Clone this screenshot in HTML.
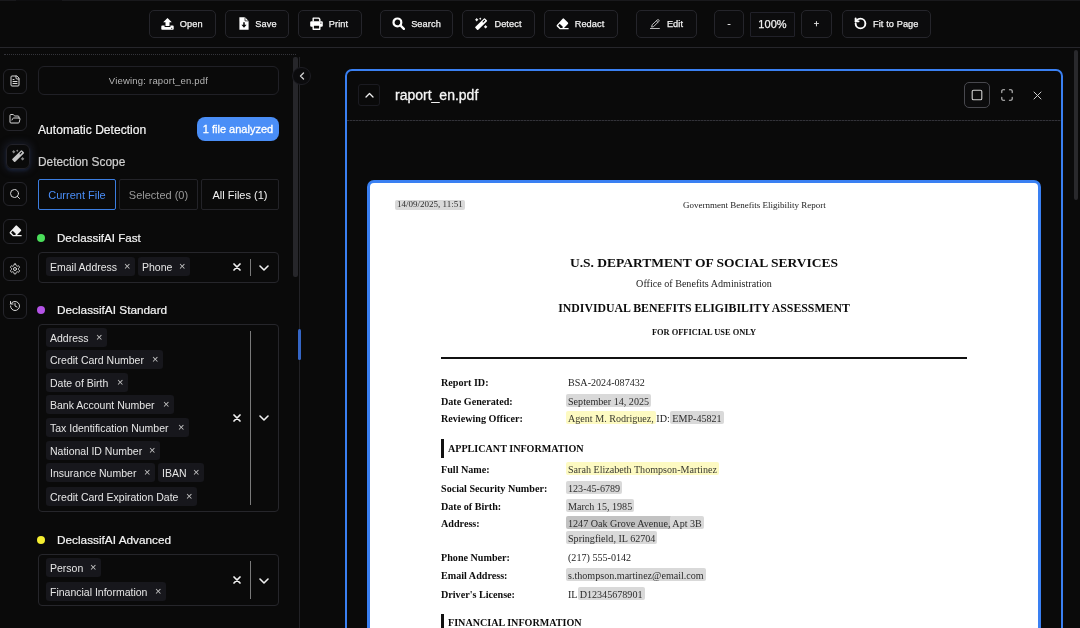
<!DOCTYPE html>
<html>
<head>
<meta charset="utf-8">
<title>raport_en.pdf</title>
<style>
*{box-sizing:border-box;margin:0;padding:0}
html,body{width:1080px;height:628px;overflow:hidden;background:#0a0a0a;font-family:"Liberation Sans",sans-serif;color:#fff}
.abs{position:absolute}
#app{position:relative;width:1080px;height:628px;overflow:hidden;background:#0a0a0a;will-change:transform}
/* toolbar */
#tb{position:absolute;left:0;top:0;width:1080px;height:48px;border-bottom:1px solid #26262b}
.tbtn{position:absolute;top:10px;height:28px;border:1px solid #25252b;border-radius:5px;background:#0c0c0d;color:#f2f2f2;font-size:9.2px;font-weight:400;display:flex;align-items:center;justify-content:center;letter-spacing:.1px;-webkit-text-stroke:.25px #f2f2f2;padding-bottom:1px}
.tbtn svg{margin-right:6px;flex:none}
/* sidebar */
#sb{position:absolute;left:0;top:48px;width:300px;height:580px}
.ib{position:absolute;left:3px;width:24px;height:24.5px;border:1px solid #25252b;border-radius:6px;display:flex;align-items:center;justify-content:center}
.h{position:absolute;left:38px;font-size:12.5px;color:#f4f4f4;white-space:nowrap;-webkit-text-stroke:.2px currentColor}
.dot{position:absolute;left:37px;width:8px;height:8px;border-radius:50%}
.sel{position:absolute;left:38px;width:241px;border:1px solid #26262b;border-radius:4px}
.chip{position:absolute;height:19px;background:#17171c;border-radius:3px;font-size:10.5px;color:#e6e6e6;padding-left:4px;line-height:20.5px;white-space:nowrap}
.chip i{position:absolute;right:4.5px;top:-.7px;font-style:normal;color:#c8c8c8;font-size:11px}
.tab{position:absolute;top:179px;height:31px;border:1px solid #232328;border-radius:2px;font-size:11px;display:flex;align-items:center;justify-content:center}
/* viewer */
#vw{position:absolute;left:345px;top:69px;width:718px;height:600px;border:2px solid #3a80f2;border-radius:7px;background:#0a0a0a}
#pg{position:absolute;left:367px;top:180px;width:674px;height:500px;border:3px solid #3a80f2;border-radius:7px;background:#fff;color:#111;font-family:"Liberation Serif",serif}
.p{position:absolute;white-space:nowrap;font-size:10.1px;color:#1c1c1c}
.b{font-weight:700;color:#0c0c0c}
.p.b{font-size:10.15px}
.hl{background:#d9d9d9;border-radius:2px;padding:2px 2px 0;margin:0 -2px;color:#2c2c2c}
.hy{background:#fdfac2;border-radius:2px;padding:2px 2px 0;margin:0 -2px;color:#3a3a30}
</style>
</head>
<body>
<div id="app">
<div id="tb">
<div class="abs" style="left:0;top:0;width:1080px;height:1px;background:#19191c"></div><div class="abs" style="left:16px;top:0;width:46px;height:1px;background:#0e0e10"></div>
<div class="tbtn" style="left:149px;width:67px"><svg width="13" height="12" viewBox="0 0 13 12" style="margin-left:-1.500px"><path d="M6.5 0 L10.8 4.3 H8.5 V8 H4.5 V4.3 H2.2 Z" fill="#fff"/><path d="M1.1 7.6 H3.6 V9 H9.4 V7.6 H11.9 A.8.8 0 0 1 12.7 8.4 V11 A.8.8 0 0 1 11.9 11.800 H1.1 A.8.8 0 0 1 .3 11 V8.4 A.8.8 0 0 1 1.1 7.6 Z" fill="#fff"/><circle cx="10.7" cy="10.3" r=".55" fill="#0a0a0a"/></svg>Open</div>
<div class="tbtn" style="left:225px;width:64px"><svg width="10" height="13" viewBox="0 0 10 13" style="margin-left:2px"><path d="M0.4 0.3 H6 L9.6 3.9 V12.7 H0.4 Z" fill="#fff"/><path d="M6 0.3 V3.9 H9.6" fill="none" stroke="#0a0a0a" stroke-width=".7"/><path d="M4.250 5.200 H5.750 V7.800 H7.600 L5 10.800 L2.400 7.800 H4.250 Z" fill="#0a0a0a"/></svg>Save</div>
<div class="tbtn" style="left:298px;width:64px"><svg width="13" height="13" viewBox="0 0 13 13" style="margin-left:-2px"><path d="M3.200 4.600 V1.100 H8.700 L9.800 2.200 V4.600" fill="none" stroke="#fff" stroke-width="1.400" stroke-linejoin="round"/><rect x=".2" y="4.300" width="12.600" height="5.400" rx="1.300" fill="#fff"/><rect x="3.200" y="8.100" width="6.600" height="4.100" fill="#0a0a0a" stroke="#fff" stroke-width="1.400" stroke-linejoin="round"/><circle cx="10.900" cy="6.100" r=".6" fill="#0a0a0a"/></svg>Print</div>
<div class="tbtn" style="left:380px;width:73px"><svg width="13" height="13" viewBox="0 0 13 13"><circle cx="5.4" cy="5.4" r="3.9" fill="none" stroke="#fff" stroke-width="2.2"/><path d="M8.4 8.4 L11.9 11.9" stroke="#fff" stroke-width="2.3" stroke-linecap="round"/></svg>Search</div>
<div class="tbtn" style="left:462px;width:73px"><svg width="13" height="14" viewBox="0 0.300 13 14"><rect x="-2" y="-6.800" width="4" height="13.600" rx=".9" transform="translate(6.150 7.450) rotate(46)" fill="#fff"/><path d="M8.150 5.150 L9.550 3.750" stroke="#0a0a0a" stroke-width="1.150" stroke-linecap="round"/><path d="M1.70 1.30 L2.54 2.21 L3.45 3.05 L2.54 3.89 L1.70 4.80 L0.86 3.89 L-0.05 3.05 L0.86 2.21 Z" fill="#f0f0f0"/><path d="M5.25 0.90 L5.80 1.50 L6.40 2.05 L5.80 2.60 L5.25 3.20 L4.70 2.60 L4.10 2.05 L4.70 1.50 Z" fill="#f0f0f0"/><path d="M10.60 8.35 L11.44 9.26 L12.35 10.10 L11.44 10.94 L10.60 11.85 L9.76 10.94 L8.85 10.10 L9.76 9.26 Z" fill="#f0f0f0"/></svg>Detect</div>
<div class="tbtn" style="left:544px;width:74px"><svg width="13" height="12" viewBox="0 0 13 12" style="margin-left:-2px"><path d="M6.6 0.7 A1 1 0 0 1 8 0.7 L11.9 4.6 A1 1 0 0 1 11.9 6 L8 9.9 H12.6 V11.3 H3.8 L0.9 8.4 A1 1 0 0 1 0.9 7 Z" fill="#fff"/><path d="M3.7 5.7 L7 9 L6.2 9.9 H4.4 L2.1 7.6 Z" fill="#0a0a0a"/></svg>Redact</div>
<div class="tbtn" style="left:636px;width:61px"><svg width="10" height="10" viewBox="0 0 10 10" fill="none" stroke="#cfcfcf" stroke-width=".9" stroke-linecap="round" stroke-linejoin="round" style="margin-right:7px"><path d="M0.400 9.500 H9.400"/><path d="M7.300 0.900 a1.050 1.050 0 0 1 1.500 1.500 L3.600 7.600 L1.600 8.100 L2.100 6.100 Z"/><path d="M6.400 1.800 L7.900 3.300"/></svg>Edit</div>
<div class="tbtn" style="left:714px;width:30px">-</div>
<div class="tbtn" style="left:750px;width:45px;top:12px;height:25px;border-radius:1px;border-color:#212129;font-size:11px">100%</div>
<div class="tbtn" style="left:801px;width:31px">+</div>
<div class="tbtn" style="left:841.5px;width:89.5px"><svg width="13" height="13" viewBox="0 0 24 24" fill="none" stroke="#fff" stroke-width="3.500" stroke-linecap="round" stroke-linejoin="round"><path d="M3 12a9 9 0 1 0 9-9 9.750 9.750 0 0 0-6.740 2.740L3 8"/><path d="M3 2.500v5.500h5.500"/></svg>Fit to Page</div>
</div>
<div id="sb">
<div class="abs" style="left:4px;top:6px;width:292px;height:0;border-top:1px dotted #34343a"></div>
<div class="ib" style="top:21px;"><svg width="12" height="12" viewBox="0 0 24 24" fill="none" stroke="#d8d8d8" stroke-width="2" stroke-linecap="round" stroke-linejoin="round"><path d="M15 2H6a2 2 0 0 0-2 2v16a2 2 0 0 0 2 2h12a2 2 0 0 0 2-2V7Z"/><path d="M14 2v4a2 2 0 0 0 2 2h4"/><path d="M10 9H8"/><path d="M16 13H8"/><path d="M16 17H8"/></svg></div>
<div class="ib" style="top:58.5px;"><svg width="12" height="12" viewBox="0 0 24 24" fill="none" stroke="#d8d8d8" stroke-width="2" stroke-linecap="round" stroke-linejoin="round"><path d="m6 14 1.500-2.900A2 2 0 0 1 9.240 10H20a2 2 0 0 1 1.940 2.500l-1.540 6a2 2 0 0 1-1.950 1.500H4a2 2 0 0 1-2-2V5a2 2 0 0 1 2-2h3.900a2 2 0 0 1 1.690.900l.810 1.200a2 2 0 0 0 1.670.900H18a2 2 0 0 1 2 2v2"/></svg></div>
<div class="ib" style="top:96px;left:6px;box-shadow:0 0 7px 2px rgba(45,52,80,.4),0 2px 3px rgba(50,90,180,.18);border-color:#222229;"><svg width="13" height="14" viewBox="0 0.300 13 14"><rect x="-2" y="-6.800" width="4" height="13.600" rx=".9" transform="translate(6.150 7.450) rotate(46)" fill="#c6c6c6"/><path d="M8.150 5.150 L9.550 3.750" stroke="#0a0a0a" stroke-width="1.150" stroke-linecap="round"/><path d="M1.70 1.30 L2.54 2.21 L3.45 3.05 L2.54 3.89 L1.70 4.80 L0.86 3.89 L-0.05 3.05 L0.86 2.21 Z" fill="#8c8c8c"/><path d="M5.25 0.90 L5.80 1.50 L6.40 2.05 L5.80 2.60 L5.25 3.20 L4.70 2.60 L4.10 2.05 L4.70 1.50 Z" fill="#8c8c8c"/><path d="M10.60 8.35 L11.44 9.26 L12.35 10.10 L11.44 10.94 L10.60 11.85 L9.76 10.94 L8.85 10.10 L9.76 9.26 Z" fill="#8c8c8c"/></svg></div>
<div class="ib" style="top:133.5px;"><svg width="12" height="12" viewBox="0 0 24 24" fill="none" stroke="#d8d8d8" stroke-width="2" stroke-linecap="round" stroke-linejoin="round"><circle cx="11" cy="11" r="8"/><path d="m21 21-4.300-4.300"/></svg></div>
<div class="ib" style="top:171px;"><svg width="13" height="12" viewBox="0 0 13 12"><path d="M6.600 0.700 A1 1 0 0 1 8 0.700 L11.900 4.600 A1 1 0 0 1 11.900 6 L8 9.900 H12.600 V11.300 H3.800 L0.900 8.400 A1 1 0 0 1 0.900 7 Z" fill="#f0f0f0"/><path d="M3.700 5.700 L7 9 L6.200 9.900 H4.400 L2.100 7.600 Z" fill="#0a0a0a"/></svg></div>
<div class="ib" style="top:208.5px;"><svg width="12" height="12" viewBox="0 0 24 24" fill="none" stroke="#d8d8d8" stroke-width="2" stroke-linecap="round" stroke-linejoin="round"><path d="M12.220 2h-.440a2 2 0 0 0-2 2v.180a2 2 0 0 1-1 1.730l-.430.250a2 2 0 0 1-2 0l-.150-.080a2 2 0 0 0-2.730.730l-.220.380a2 2 0 0 0 .730 2.730l.150.100a2 2 0 0 1 1 1.720v.510a2 2 0 0 1-1 1.740l-.150.090a2 2 0 0 0-.730 2.730l.220.380a2 2 0 0 0 2.730.730l.150-.080a2 2 0 0 1 2 0l.430.250a2 2 0 0 1 1 1.730V20a2 2 0 0 0 2 2h.440a2 2 0 0 0 2-2v-.180a2 2 0 0 1 1-1.730l.430-.250a2 2 0 0 1 2 0l.150.080a2 2 0 0 0 2.730-.730l.220-.390a2 2 0 0 0-.730-2.730l-.150-.080a2 2 0 0 1-1-1.740v-.500a2 2 0 0 1 1-1.740l.150-.090a2 2 0 0 0 .730-2.730l-.220-.380a2 2 0 0 0-2.730-.730l-.150.080a2 2 0 0 1-2 0l-.430-.250a2 2 0 0 1-1-1.730V4a2 2 0 0 0-2-2z"/><circle cx="12" cy="12" r="3"/></svg></div>
<div class="ib" style="top:246px;"><svg width="12" height="12" viewBox="0 0 24 24" fill="none" stroke="#d8d8d8" stroke-width="2" stroke-linecap="round" stroke-linejoin="round"><path d="M3 12a9 9 0 1 0 9-9 9.750 9.750 0 0 0-6.740 2.740L3 8"/><path d="M3 3v5h5"/><path d="M12 7v5l4 2"/></svg></div>
<div class="abs" style="left:38px;top:18px;width:241px;height:29px;border:1px solid #202026;border-radius:6px;font-size:9.500px;color:#b4b4b4;text-align:center;line-height:27px;letter-spacing:.2px">Viewing: raport_en.pdf</div>
<div class="h" style="top:75px;font-size:12.1px">Automatic Detection</div>
<div class="abs" style="left:197px;top:69px;width:82px;height:24px;background:#4a8ef7;border-radius:8px;font-size:11px;color:#fff;text-align:center;line-height:24px;-webkit-text-stroke:.3px #fff">1 file analyzed</div>
<div class="h" style="top:107px;color:#cfcfcf;font-size:11.9px">Detection Scope</div>
<div class="tab" style="top:131px;left:38px;width:78px;border-color:#3b7de0;color:#4a8ef7">Current File</div>
<div class="tab" style="top:131px;left:119px;width:79px;color:#9a9a9a">Selected (0)</div>
<div class="tab" style="top:131px;left:201px;width:78px;color:#f2f2f2">All Files (1)</div>
<div class="dot" style="top:185.5px;background:#4ade5a"></div><div class="h" style="left:57px;top:183px;font-size:11.6px">DeclassifAI Fast</div>
<div class="sel" style="top:204px;height:30.5px"></div>
<div class="chip" style="left:46px;top:209px;width:89px">Email Address<i>×</i></div><div class="chip" style="left:138px;top:209px;width:52px">Phone<i>×</i></div><svg class="abs" style="left:233px;top:215px" width="8" height="8" viewBox="0 0 8 8"><path d="M1 1 L7 7 M7 1 L1 7" stroke="#f0f0f0" stroke-width="1.7" stroke-linecap="round"/></svg><div class="abs" style="left:250px;top:211px;width:1px;height:17px;background:#7a7a7a"></div><svg class="abs" style="left:259px;top:217px" width="10" height="6" viewBox="0 0 10 6"><path d="M1 1 L5 5 L9 1" fill="none" stroke="#f0f0f0" stroke-width="1.6" stroke-linecap="round" stroke-linejoin="round"/></svg>
<div class="dot" style="top:257.5px;background:#b453e6"></div><div class="h" style="left:57px;top:255px;font-size:11.8px">DeclassifAI Standard</div>
<div class="sel" style="top:276px;height:188px"></div>
<div class="chip" style="left:46px;top:280px;width:61px">Address<i>×</i></div>
<div class="chip" style="left:46px;top:302px;width:117px">Credit Card Number<i>×</i></div>
<div class="chip" style="left:46px;top:325px;width:82px">Date of Birth<i>×</i></div>
<div class="chip" style="left:46px;top:347px;width:128px">Bank Account Number<i>×</i></div>
<div class="chip" style="left:46px;top:370px;width:143px">Tax Identification Number<i>×</i></div>
<div class="chip" style="left:46px;top:393px;width:114px">National ID Number<i>×</i></div>
<div class="chip" style="left:46px;top:415px;width:109px">Insurance Number<i>×</i></div><div class="chip" style="left:158px;top:415px;width:46px">IBAN<i>×</i></div>
<div class="chip" style="left:46px;top:439px;width:151px">Credit Card Expiration Date<i>×</i></div>
<svg class="abs" style="left:233px;top:366px" width="8" height="8" viewBox="0 0 8 8"><path d="M1 1 L7 7 M7 1 L1 7" stroke="#f0f0f0" stroke-width="1.7" stroke-linecap="round"/></svg><div class="abs" style="left:250px;top:283px;width:1px;height:174px;background:#7a7a7a"></div><svg class="abs" style="left:259px;top:367px" width="10" height="6" viewBox="0 0 10 6"><path d="M1 1 L5 5 L9 1" fill="none" stroke="#f0f0f0" stroke-width="1.6" stroke-linecap="round" stroke-linejoin="round"/></svg>
<div class="dot" style="top:487.5px;background:#f5ee31"></div><div class="h" style="left:57px;top:485px;font-size:11.8px">DeclassifAI Advanced</div>
<div class="sel" style="top:506px;height:52px"></div>
<div class="chip" style="left:46px;top:510px;width:55px">Person<i>×</i></div><div class="chip" style="left:46px;top:534px;width:120px">Financial Information<i>×</i></div><svg class="abs" style="left:233px;top:528px" width="8" height="8" viewBox="0 0 8 8"><path d="M1 1 L7 7 M7 1 L1 7" stroke="#f0f0f0" stroke-width="1.7" stroke-linecap="round"/></svg><div class="abs" style="left:250px;top:513px;width:1px;height:38px;background:#7a7a7a"></div><svg class="abs" style="left:259px;top:530px" width="10" height="6" viewBox="0 0 10 6"><path d="M1 1 L5 5 L9 1" fill="none" stroke="#f0f0f0" stroke-width="1.6" stroke-linecap="round" stroke-linejoin="round"/></svg>
<div class="abs" style="left:293px;top:9px;width:5px;height:220px;background:#26262a;border-radius:2px"></div>
<div class="abs" style="left:299px;top:9px;width:1px;height:571px;background:#222226"></div>
<div class="abs" style="left:297.5px;top:281px;width:3px;height:31px;background:#3566c6;border-radius:1.5px"></div>
<div class="abs" style="left:292px;top:18.500px;width:18.500px;height:18.500px;border-radius:50%;background:#0b0b0d;border:1px solid #1d1d23"></div><svg class="abs" style="left:298.500px;top:24px" width="6" height="8" viewBox="0 0 6 8"><path d="M4.500 1 L1.500 4 L4.500 7" fill="none" stroke="#cfcfcf" stroke-width="1.400" stroke-linecap="round" stroke-linejoin="round"/></svg>
</div>
<div id="vw">
<div class="abs" style="left:0;top:49px;width:714px;height:1px;background:repeating-linear-gradient(90deg,#323238 0 2px,#1c1c20 2px 3px)"></div>
<div class="abs" style="left:11px;top:13px;width:22px;height:22px;border:1px solid #1b1b21;border-radius:3px"></div>
<svg class="abs" style="left:18px;top:21px" width="9" height="6" viewBox="0 0 9 6"><path d="M1 5 L4.500 1.500 L8 5" fill="none" stroke="#f0f0f0" stroke-width="1.300" stroke-linecap="round" stroke-linejoin="round"/></svg>
<div class="abs" style="left:48px;top:16px;font-size:14px;color:#f6f6f6;-webkit-text-stroke:.3px #f6f6f6;white-space:nowrap" id="ttl">raport_en.pdf</div>
<div class="abs" style="left:616.5px;top:11px;width:26px;height:26px;border:1px solid #48484e;border-radius:5px;background:#0c0c0d"></div>
<svg class="abs" style="left:623.5px;top:18px" width="12" height="12" viewBox="0 0 12 12"><rect x="1.200" y="1.200" width="9.600" height="9.600" rx="1.300" fill="none" stroke="#d0d0d0" stroke-width="1.100"/></svg>
<svg class="abs" style="left:654px;top:18px" width="12" height="12" viewBox="0 0 12 12" fill="none" stroke="#c8c8c8" stroke-width="1.100" stroke-linecap="round" stroke-linejoin="round"><path d="M0.800 3.600 V2 A1.200 1.200 0 0 1 2 0.800 H3.600"/><path d="M8.400 0.800 H10 A1.200 1.200 0 0 1 11.200 2 V3.600"/><path d="M11.200 8.400 V10 A1.200 1.200 0 0 1 10 11.200 H8.400"/><path d="M3.600 11.200 H2 A1.200 1.200 0 0 1 0.800 10 V8.400"/></svg>
<svg class="abs" style="left:686px;top:20px" width="9" height="9" viewBox="0 0 9 9"><path d="M1 1 L8 8 M8 1 L1 8" stroke="#cdcdcd" stroke-width="1" stroke-linecap="round"/></svg>
</div>
<div class="abs" style="left:1074px;top:50px;width:4px;height:150px;background:#29292c;border-radius:2px"></div>
<div id="pg">
<div class="p " style="left:27px;top:17px;font-size:9px;"><span class="hl" style="display:inline-block;height:9.500px;line-height:9.500px;padding:0 2px;vertical-align:top">14/09/2025, 11:51</span></div>
<div class="p " style="left:313px;top:17px;font-size:9px;">Government Benefits Eligibility Report</div>
<div class="p b" style="left:0;width:668px;text-align:center;top:72px;font-size:13.5px;">U.S. DEPARTMENT OF SOCIAL SERVICES</div>
<div class="p " style="left:0;width:668px;text-align:center;top:95px;font-size:10.1px;">Office of Benefits Administration</div>
<div class="p b" style="left:0;width:668px;text-align:center;top:118px;font-size:11.8px;">INDIVIDUAL BENEFITS ELIGIBILITY ASSESSMENT</div>
<div class="p b" style="left:0;width:668px;text-align:center;top:145px;font-size:8.4px;">FOR OFFICIAL USE ONLY</div>
<div class="abs" style="left:71px;top:173.7px;width:526px;height:2px;background:#111"></div>
<div class="p b" style="left:71px;top:194.1px;">Report ID:</div>
<div class="p " style="left:198px;top:194.1px;">BSA-2024-087432</div>
<div class="p b" style="left:71px;top:212.7px;">Date Generated:</div>
<div class="p " style="left:198px;top:212.7px;"><span class="hl">September 14, 2025</span></div>
<div class="p b" style="left:71px;top:230.3px;">Reviewing Officer:</div>
<div class="p " style="left:198px;top:230.3px;"><span class="hy">Agent M. Rodriguez,</span> ID: <span class="hl">EMP-45821</span></div>
<div class="p b" style="left:71px;top:281.1px;">Full Name:</div>
<div class="p " style="left:198px;top:281.1px;"><span class="hy">Sarah Elizabeth Thompson-Martinez</span></div>
<div class="p b" style="left:71px;top:299.6px;">Social Security Number:</div>
<div class="p " style="left:198px;top:299.6px;"><span class="hl">123-45-6789</span></div>
<div class="p b" style="left:71px;top:318.0px;">Date of Birth:</div>
<div class="p " style="left:198px;top:318.0px;"><span class="hl">March 15, 1985</span></div>
<div class="p b" style="left:71px;top:335.4px;">Address:</div>
<div class="p " style="left:198px;top:335.4px;"><span class="hl" style="background:#c2c2c2">1247 Oak Grove Avenue,</span><span class="hl" style="margin-left:0;padding-left:0"> Apt 3B</span></div>
<div class="p " style="left:198px;top:349.7px;"><span class="hl">Springfield, IL 62704</span></div>
<div class="p b" style="left:71px;top:369.0px;">Phone Number:</div>
<div class="p " style="left:198px;top:369.0px;">(217) 555-0142</div>
<div class="p b" style="left:71px;top:387.0px;">Email Address:</div>
<div class="p " style="left:198px;top:387.0px;"><span class="hl">s.thompson.martinez@email.com</span></div>
<div class="p b" style="left:71px;top:405.7px;">Driver's License:</div>
<div class="p " style="left:198px;top:405.7px;">IL <span class="hl">D12345678901</span></div>
<div class="abs" style="left:71px;top:256.3px;width:2.5px;height:18.5px;background:#111"></div><div class="p b" style="left:78px;top:259.8px;font-size:10.1px;">APPLICANT INFORMATION</div>
<div class="abs" style="left:71px;top:430.5px;width:2.5px;height:18.5px;background:#111"></div><div class="p b" style="left:78px;top:434.2px;font-size:10.1px;">FINANCIAL INFORMATION</div>
</div>
</div>
</body>
</html>
